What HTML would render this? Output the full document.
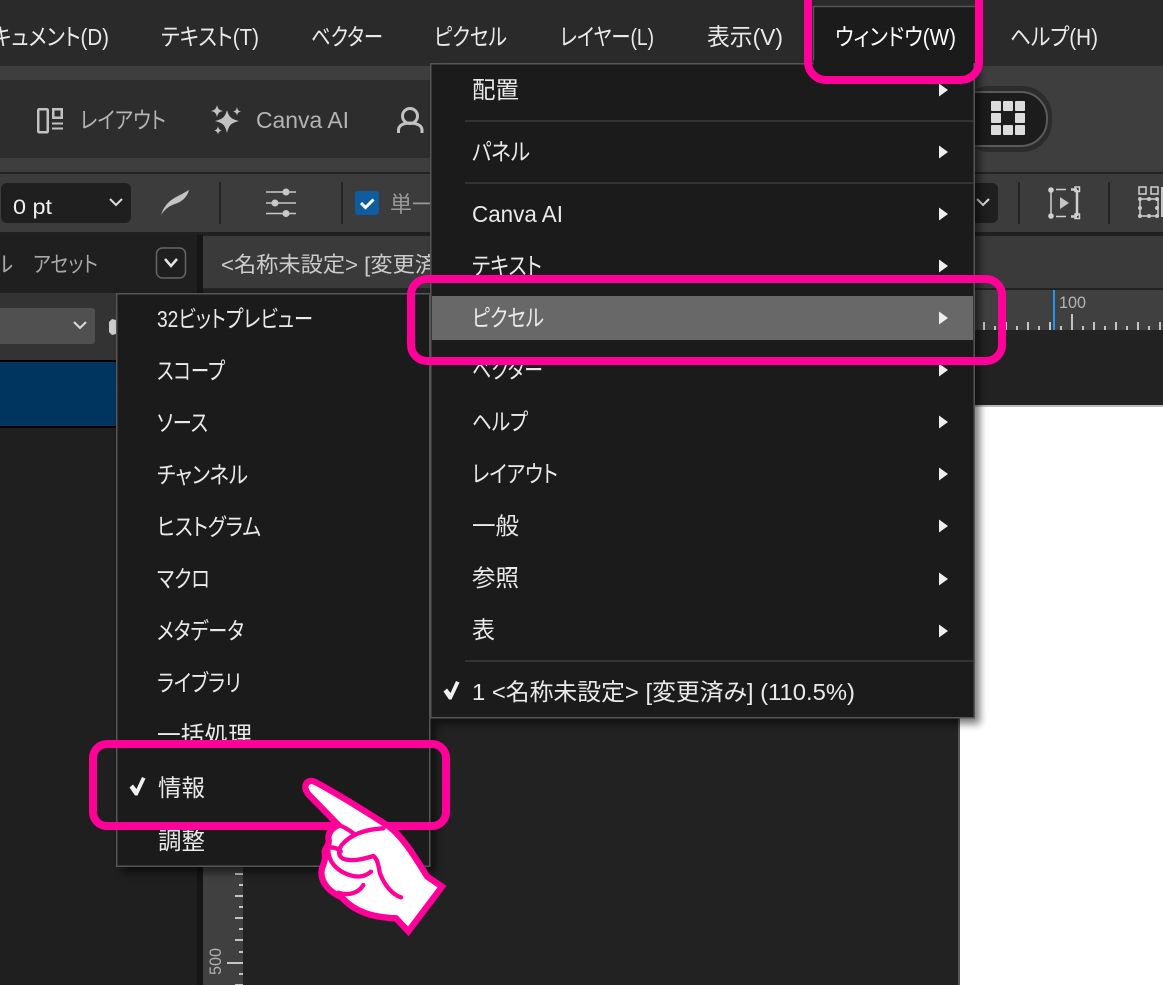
<!DOCTYPE html>
<html lang="ja"><head><meta charset="utf-8"><title>Window menu</title>
<style>
html,body{margin:0;padding:0;background:#222;width:1163px;height:985px;overflow:hidden}
svg{display:block}
text{font-family:"Liberation Sans","Noto Sans CJK JP",sans-serif;font-size:23px;fill:#e6e6e6;font-feature-settings:"palt"}
.t{font-size:23.5px;fill:#eaeaea}
.g{fill:#b4b4b4}
</style></head><body>
<svg width="1163" height="985" viewBox="0 0 1163 985" xmlns="http://www.w3.org/2000/svg">
<defs>
<filter id="sh" x="-5%" y="-5%" width="115%" height="115%"><feGaussianBlur stdDeviation="4"/></filter>
</defs>
<!-- backgrounds -->
<rect width="1163" height="985" fill="#222"/>
<rect width="1163" height="66" fill="#2a2a2a"/>
<rect y="66" width="1163" height="14" fill="#3e3e3e"/>
<rect y="80" width="1163" height="78" fill="#2d2d2d"/>
<rect x="975" y="80" width="188" height="78" fill="#3e3e3e"/>
<rect y="158" width="1163" height="14" fill="#3e3e3e"/>
<rect y="172" width="1163" height="2" fill="#232323"/>
<rect y="174" width="1163" height="58" fill="#3c3c3c"/>
<rect y="232" width="1163" height="3" fill="#202020"/>
<rect y="235" width="197" height="58" fill="#1f1f1f"/>
<rect x="197" y="235" width="6" height="750" fill="#151515"/>
<rect x="203" y="236" width="960" height="52" fill="#3a3a3a"/>
<rect x="203" y="288" width="960" height="2" fill="#232323"/>
<rect x="975" y="290" width="188" height="40" fill="#404040"/>
<!-- left panel -->
<rect y="293" width="197" height="67" fill="#333"/>
<rect x="-6" y="308" width="101" height="36" rx="3" fill="#505050"/>
<path d="M74 322l6 6 6-6" fill="none" stroke="#ddd" stroke-width="2"/>
<path d="M109 322l3-3 4 1v14l-4 1-3-3z" fill="#ccc"/>
<rect y="360" width="197" height="2" fill="#000"/>
<rect y="362" width="197" height="64" fill="#00355f"/>
<rect y="426" width="197" height="2" fill="#000"/>
<rect y="428" width="197" height="557" fill="#1f1f1f"/>
<!-- canvas -->
<rect x="960" y="407" width="203" height="578" fill="#fff"/>
<rect x="960" y="405" width="203" height="2" fill="#bbb"/>
<rect x="958" y="407" width="2" height="578" fill="#555"/>
<!-- left ruler -->
<rect x="203" y="860" width="40" height="125" fill="#404040"/>
<path d="M235 874h8M239 885h4M235 896h8M239 907h4M235 918h8M239 929h4M235 940h8M239 952h4M227 963h16M239 974h4M235 985h8" stroke="#c4c4c4" stroke-width="2"/>
<text transform="translate(221,975) rotate(-90)" style="font-size:17px;fill:#b0b0b0" textLength="27" lengthAdjust="spacingAndGlyphs">500</text>
<!-- top ruler -->
<path d="M984 322v8M995 326v4M1006 322v8M1017 326v4M1028 322v8M1039 326v4M1050 322v8M1061 326v4M1072 314v16M1083 326v4M1094 322v8M1105 326v4M1116 322v8M1127 326v4M1138 322v8M1149 326v4M1160 322v8" stroke="#c4c4c4" stroke-width="2"/>
<rect x="1053" y="290" width="2" height="40" fill="#2196f3"/>
<text x="1059" y="308" style="font-size:17px;fill:#b4b4b4" textLength="27" lengthAdjust="spacingAndGlyphs">100</text>

<!-- menu bar -->
<text class="t" x="-24" y="45" textLength="133" lengthAdjust="spacingAndGlyphs">ドキュメント(D)</text>
<text class="t" x="161" y="45" textLength="98" lengthAdjust="spacingAndGlyphs">テキスト(T)</text>
<text class="t" x="311" y="45" textLength="72" lengthAdjust="spacingAndGlyphs">ベクター</text>
<text class="t" x="434" y="45" textLength="73" lengthAdjust="spacingAndGlyphs">ピクセル</text>
<text class="t" x="560" y="45" textLength="94" lengthAdjust="spacingAndGlyphs">レイヤー(L)</text>
<text class="t" x="707" y="45" textLength="76" lengthAdjust="spacingAndGlyphs">表示(V)</text>
<text class="t" x="1010" y="45" textLength="88" lengthAdjust="spacingAndGlyphs">ヘルプ(H)</text>
<rect x="813" y="6" width="162" height="60" fill="#1b1b1b"/>
<path d="M813.5 66V6.500H975" fill="none" stroke="#555" stroke-width="1.500"/>
<text class="t" x="835" y="45" textLength="121" lengthAdjust="spacingAndGlyphs" style="fill:#fff">ウィンドウ(W)</text>

<!-- toolbar row 1 -->
<g fill="none" stroke="#c2c2c2" stroke-width="2.500"><rect x="38.250" y="109.250" width="9.500" height="23" rx="1"/><rect x="53.250" y="109.250" width="8.500" height="8.500"/></g>
<path d="M52 123.500h11M52 128.500h11" stroke="#c2c2c2" stroke-width="2"/>
<text class="g" x="80" y="128" textLength="86" lengthAdjust="spacingAndGlyphs">レイアウト</text>
<path fill="#c2c2c2" d="M227 110c2 7 4 9 12 11-8 2-10 4-12 12-2-8-4-10-12-12 8-2 10-4 12-11zM217 105c1 4 2 5 6 6-4 1-5 2-6 6-1-4-2-5-6-6 4-1 5-2 6-6zM237 107c.6 3 1.500 4 4 4.500-2.500.6-3.400 1.500-4 4-.6-2.500-1.500-3.400-4-4 2.500-.5 3.400-1.500 4-4.500zM218 126c.6 3 1.500 4 4 4.500-2.500.6-3.400 1.500-4 4-.6-2.500-1.500-3.400-4-4 2.500-.5 3.400-1.500 4-4.500z"/>
<text class="g" x="256" y="128" textLength="93" lengthAdjust="spacingAndGlyphs">Canva AI</text>
<g fill="none" stroke="#c2c2c2" stroke-width="3"><circle cx="410" cy="116" r="7.500"/><path d="M398.500 133v-3c0-4 4-7 11.500-7s12 3 12 7v3"/></g>
<!-- grid pill -->
<rect x="960" y="86" width="92" height="66" rx="30" fill="#2c2c2c"/>
<rect x="952" y="92" width="95" height="54" rx="26" fill="#1c1c1c" stroke="#5a5a5a" stroke-width="2"/>
<g fill="#dcdcdc"><rect x="991" y="101" width="10" height="10" rx="1"/><rect x="1003" y="101" width="10" height="10" rx="1"/><rect x="1015" y="101" width="10" height="10" rx="1"/><rect x="991" y="113" width="10" height="10" rx="1"/><rect x="1015" y="113" width="10" height="10" rx="1"/><rect x="991" y="125" width="10" height="10" rx="1"/><rect x="1003" y="125" width="10" height="10" rx="1"/><rect x="1015" y="125" width="10" height="10" rx="1"/></g>

<!-- toolbar row 2 -->
<rect x="1" y="183" width="130" height="40" rx="6" fill="#1f1f1f"/>
<text x="13" y="214" style="font-size:21px;fill:#f0f0f0" textLength="39" lengthAdjust="spacingAndGlyphs">0 pt</text>
<path d="M110 199l6 6 6-6" fill="none" stroke="#ddd" stroke-width="2"/>
<path d="M161 215C165 203 172 199 180 195C184 193 187 191 189 190C187 198 181 202 175 204C169 206 165 209 161 215Z" fill="#c4c4c4"/>
<rect x="219" y="182" width="2" height="42" fill="#232323"/><rect x="341" y="182" width="2" height="42" fill="#232323"/>
<path d="M266 192h30M266 203h30M266 213.500h30" stroke="#c8c8c8" stroke-width="1.500"/>
<circle cx="286" cy="192" r="3.500" fill="#c8c8c8"/><circle cx="275" cy="203" r="3.500" fill="#c8c8c8"/><circle cx="286" cy="213.500" r="3.500" fill="#c8c8c8"/>
<rect x="355" y="191" width="24" height="24" rx="3" fill="#0d5da0"/>
<path d="M361 203l4.500 4.500 8-8" fill="none" stroke="#fff" stroke-width="3"/>
<text x="390" y="212" style="font-size:22px;fill:#999" textLength="44">単一</text>
<rect x="960" y="183" width="38" height="40" rx="6" fill="#1f1f1f"/>
<path d="M977 199l6 6 6-6" fill="none" stroke="#ddd" stroke-width="2"/>
<rect x="1018" y="182" width="2" height="42" fill="#232323"/><rect x="1108" y="182" width="2" height="42" fill="#232323"/>
<g fill="none" stroke="#d0d0d0" stroke-width="1.500"><path d="M1051 190v26M1056 189.500h10M1056 216.500h10" /><path d="M1077 189.500h-6M1077 216.500h-6M1077 190v26" stroke-width="2.500"/><rect x="1075" y="187" width="4.500" height="4.500"/><rect x="1075" y="214" width="4.500" height="4.500"/></g>
<circle cx="1051" cy="190" r="2.800" fill="#d0d0d0"/><circle cx="1051" cy="216" r="2.800" fill="#d0d0d0"/>
<path d="M1060 197l9 6-9 6z" fill="#c4c4c4"/>
<g fill="none" stroke="#d0d0d0" stroke-width="1.500"><rect x="1139" y="187" width="7" height="7"/><rect x="1151" y="187" width="7" height="7"/><rect x="1140" y="199" width="18" height="17"/></g>
<g fill="#c8c8c8"><circle cx="1140" cy="199" r="2"/><circle cx="1149" cy="199" r="2"/><circle cx="1157" cy="199" r="2"/><circle cx="1140" cy="208" r="2"/><circle cx="1157" cy="208" r="2"/><circle cx="1140" cy="216" r="2"/><circle cx="1149" cy="216" r="2"/><circle cx="1157" cy="216" r="2"/><rect x="1161" y="187" width="2" height="30"/></g>

<!-- panel tabs -->
<text x="-7" y="272" style="font-size:22px;fill:#a8a8a8" textLength="20" lengthAdjust="spacingAndGlyphs">ル</text>
<text x="33" y="272" style="font-size:22px;fill:#a8a8a8" textLength="65" lengthAdjust="spacingAndGlyphs">アセット</text>
<rect x="156.500" y="248" width="29" height="30" rx="6" fill="none" stroke="#666" stroke-width="1.500"/>
<path d="M165 259l6 7 6-7" fill="none" stroke="#e6e6e6" stroke-width="2.500"/>
<text x="221" y="272" style="font-size:21.500px;fill:#ccc" textLength="216" lengthAdjust="spacingAndGlyphs">&lt;名称未設定&gt; [変更済</text>

<!-- submenu -->
<rect x="122" y="299" width="314" height="574" fill="#000" opacity=".5" filter="url(#sh)"/>
<rect x="116.750" y="293.750" width="313" height="572.500" fill="#1b1b1b" stroke="#555" stroke-width="1.500"/>
<text class="t" x="157" y="327" textLength="156" lengthAdjust="spacingAndGlyphs">32ビットプレビュー</text>
<text class="t" x="157" y="379" textLength="68" lengthAdjust="spacingAndGlyphs">スコープ</text>
<text class="t" x="157" y="431" textLength="51" lengthAdjust="spacingAndGlyphs">ソース</text>
<text class="t" x="157" y="483" textLength="91" lengthAdjust="spacingAndGlyphs">チャンネル</text>
<text class="t" x="157" y="535" textLength="104" lengthAdjust="spacingAndGlyphs">ヒストグラム</text>
<text class="t" x="157" y="587" textLength="53" lengthAdjust="spacingAndGlyphs">マクロ</text>
<text class="t" x="157" y="639" textLength="87" lengthAdjust="spacingAndGlyphs">メタデータ</text>
<text class="t" x="157" y="691" textLength="84" lengthAdjust="spacingAndGlyphs">ライブラリ</text>
<text class="t" x="157" y="743" textLength="95" lengthAdjust="spacingAndGlyphs">一括処理</text>
<text class="t" x="158" y="796" textLength="47" lengthAdjust="spacingAndGlyphs">情報</text>
<text class="t" x="158" y="849" textLength="47" lengthAdjust="spacingAndGlyphs">調整</text>
<path d="M129.500 787.500l3.500-3 3.500 4.500 5.500-12 3.500 1.500-8 17h-2.500z" fill="#f0f0f0"/>

<!-- main menu -->
<rect x="436" y="69" width="544" height="655" fill="#000" opacity=".5" filter="url(#sh)"/>
<rect x="430.750" y="63.750" width="543.500" height="654" fill="#1b1b1b" stroke="#555" stroke-width="1.500"/>
<rect x="813.500" y="60" width="160" height="8" fill="#1b1b1b"/>
<rect x="432" y="296" width="541" height="44" fill="#686868"/>
<path d="M465 121h508M465 183h508M465 661h508" stroke="#333" stroke-width="2"/>
<text class="t" x="472" y="98" textLength="47" lengthAdjust="spacingAndGlyphs">配置</text>
<text class="t" x="472" y="160" textLength="58" lengthAdjust="spacingAndGlyphs">パネル</text>
<text class="t" x="472" y="222" textLength="91" lengthAdjust="spacingAndGlyphs">Canva AI</text>
<text class="t" x="472" y="274" textLength="70" lengthAdjust="spacingAndGlyphs">テキスト</text>
<text class="t" x="472" y="326" textLength="72" lengthAdjust="spacingAndGlyphs">ピクセル</text>
<text class="t" x="472" y="378" textLength="71" lengthAdjust="spacingAndGlyphs">ベクター</text>
<text class="t" x="472" y="430" textLength="56" lengthAdjust="spacingAndGlyphs">ヘルプ</text>
<text class="t" x="472" y="482" textLength="86" lengthAdjust="spacingAndGlyphs">レイアウト</text>
<text class="t" x="472" y="534" textLength="47" lengthAdjust="spacingAndGlyphs">一般</text>
<text class="t" x="472" y="586" textLength="47" lengthAdjust="spacingAndGlyphs">参照</text>
<text class="t" x="472" y="638" textLength="23" lengthAdjust="spacingAndGlyphs">表</text>
<text class="t" x="472" y="700" textLength="383" lengthAdjust="spacingAndGlyphs">1 &lt;名称未設定&gt; [変更済み] (110.5%)</text>
<path d="M443.500 691.500l3.500-3 3.500 4.500 5.500-12 3.500 1.500-8 17h-2.500z" fill="#f0f0f0"/>
<g fill="#eee">
<path d="M939 83.500l9 6.500-9 6.500z"/><path d="M939 145.500l9 6.500-9 6.500z"/><path d="M939 207.500l9 6.500-9 6.500z"/><path d="M939 259.500l9 6.500-9 6.500z"/><path d="M939 311.500l9 6.500-9 6.500z"/><path d="M939 363.500l9 6.500-9 6.500z"/><path d="M939 415.500l9 6.500-9 6.500z"/><path d="M939 467.500l9 6.500-9 6.500z"/><path d="M939 519.500l9 6.500-9 6.500z"/><path d="M939 572.500l9 6.500-9 6.500z"/><path d="M939 624.500l9 6.500-9 6.500z"/>
</g>

<!-- highlight boxes -->
<g fill="none" stroke="#ff0098" stroke-width="8">
<path d="M808 -5V62a18 18 0 0 0 18 18H961a18 18 0 0 0 18-18V-5"/>
<rect x="411" y="279" width="591" height="82" rx="16"/>
<rect x="93" y="744" width="353" height="82" rx="14"/>
</g>

<!-- hand -->
<svg x="300" y="770" width="150" height="170" viewBox="0 0 450 510">
<path d="M16 52C16 36 30 28 46 36C100 65 190 120 265 168C310 200 350 270 382 320L426 350L325 484L288 445C220 442 165 427 125 382C90 367 63 340 64 305C66 285 78 280 74 245C73 235 88 230 86 210C82 190 95 175 115 165L24 72C19 63 16 58 16 52Z" fill="#fff" stroke="#ff0098" stroke-width="19"/>
<g fill="none" stroke="#ff0098" stroke-width="13" stroke-linecap="round" stroke-linejoin="round">
<path d="M250 175C190 178 150 195 125 225C112 245 115 262 135 268C165 275 195 265 220 258C235 270 235 290 240 310C255 350 280 375 303 382"/>
<path d="M85 240C85 275 110 300 140 312C165 322 190 325 213 305"/>
<path d="M115 368C145 378 175 370 190 345"/>
<path d="M88 232C100 232 115 235 122 245"/>
<path d="M115 165C130 170 145 178 160 190"/>
</g>
</svg>
</svg>
</body></html>
